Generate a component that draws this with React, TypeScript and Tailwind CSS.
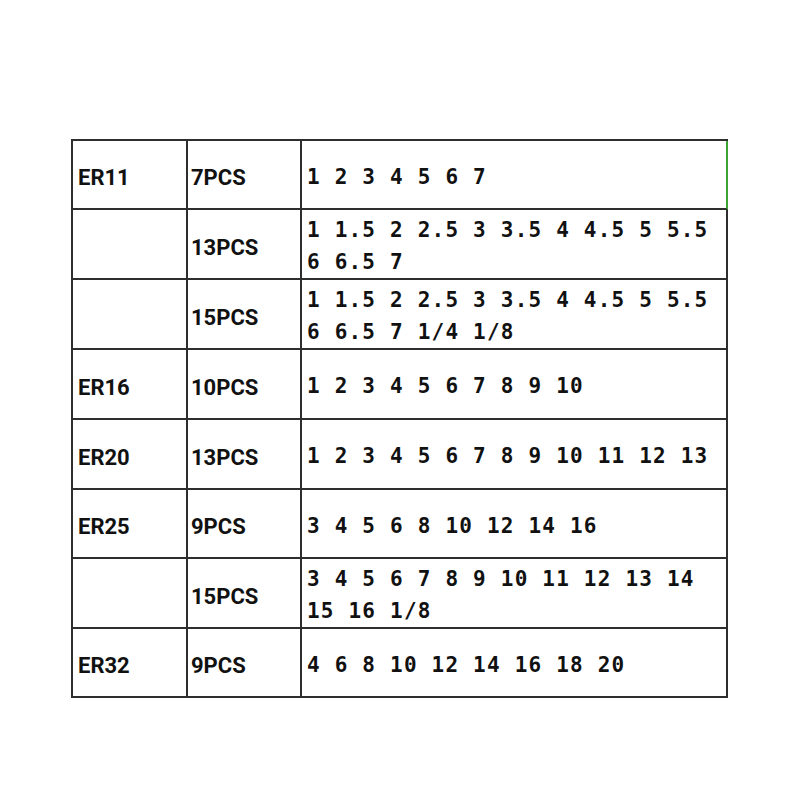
const ROWS: { er: string; pcs: string; sizes: string; h: string }[] = [
  { er: "ER11", pcs: "7PCS", sizes: "1 2 3 4 5 6 7", h: "h-[69px]" },
  { er: "", pcs: "13PCS", sizes: "1 1.5 2 2.5 3 3.5 4 4.5 5 5.5 6 6.5 7", h: "h-[70px]" },
  { er: "", pcs: "15PCS", sizes: "1 1.5 2 2.5 3 3.5 4 4.5 5 5.5 6 6.5 7 1/4 1/8", h: "h-[70px]" },
  { er: "ER16", pcs: "10PCS", sizes: "1 2 3 4 5 6 7 8 9 10", h: "h-[70px]" },
  { er: "ER20", pcs: "13PCS", sizes: "1 2 3 4 5 6 7 8 9 10 11 12 13", h: "h-[70px]" },
  { er: "ER25", pcs: "9PCS", sizes: "3 4 5 6 8 10 12 14 16", h: "h-[69px]" },
  { er: "", pcs: "15PCS", sizes: "3 4 5 6 7 8 9 10 11 12 13 14 15 16 1/8", h: "h-[70px]" },
  { er: "ER32", pcs: "9PCS", sizes: "4 6 8 10 12 14 16 18 20", h: "h-[69px]" },
];

export default function App() {
  return (
    <div className="h-[800px] w-[800px] bg-white pt-[139px] pl-[71px]">
      {/* collet size table */}
      <div className="grid w-[657px] grid-cols-[115px_114px_426px] border-l-2 border-t-2 border-[#2e2e2e] text-[#111]">
        {ROWS.map((r, i) => (
          <div key={i} className="contents">
            <div
              className={`${r.h} flex items-center border-b-2 border-r-2 border-[#2e2e2e] pl-[5px] pt-[6px] font-['Roboto',sans-serif] text-[22px] font-bold`}
            >
              {r.er}
            </div>
            <div
              className={`${r.h} flex items-center border-b-2 border-r-2 border-[#2e2e2e] pl-[3px] pt-[6px] font-['Roboto',sans-serif] text-[22px] font-bold`}
            >
              {r.pcs}
            </div>
            <div
              className={`${r.h} flex items-center border-b-2 border-r-2 pl-[5px] pt-[4px] ${
                i === 0 ? "border-b-[#2e2e2e] border-r-[#3da233]" : "border-[#2e2e2e]"
              }`}
            >
              <p className="font-['DejaVu_Sans_Mono',monospace] text-[21px] font-bold leading-[32px] tracking-[1.2px]">
                {r.sizes}
              </p>
            </div>
          </div>
        ))}
      </div>
    </div>
  );
}
